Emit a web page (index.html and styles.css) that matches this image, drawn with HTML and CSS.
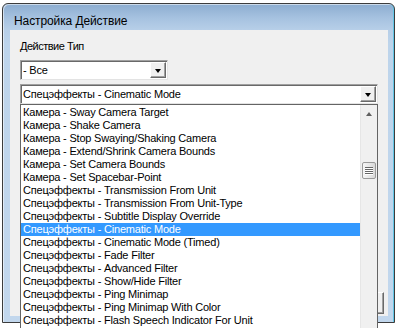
FILE: index.html
```html
<!DOCTYPE html>
<html lang="ru">
<head>
<meta charset="utf-8">
<title>Настройка Действие</title>
<link rel="stylesheet" href="styles.css">
</head>
<body>
<div class="desktop">
  <div class="window">
    <div class="titlebar"><span class="title">Настройка Действие</span></div>
    <div class="client">
      <div class="label">Действие Тип</div>
      <div class="combo combo-small">
        <span class="ctext">- Все</span>
        <span class="ddbtn"><span class="arrow"></span></span>
      </div>
      <div class="combo combo-wide">
        <span class="ctext">Спецэффекты - Cinematic Mode</span>
        <span class="ddbtn"><span class="arrow"></span></span>
      </div>
      <div class="spacer"></div>
      <div class="btnrow"><div class="dlgbtn"></div></div>
    </div>
  </div>

  <div class="droplist">
    <ul class="items">
      <li>Камера - Sway Camera Target</li>
      <li>Камера - Shake Camera</li>
      <li>Камера - Stop Swaying/Shaking Camera</li>
      <li>Камера - Extend/Shrink Camera Bounds</li>
      <li>Камера - Set Camera Bounds</li>
      <li>Камера - Set Spacebar-Point</li>
      <li>Спецэффекты - Transmission From Unit</li>
      <li>Спецэффекты - Transmission From Unit-Type</li>
      <li>Спецэффекты - Subtitle Display Override</li>
      <li class="sel">Спецэффекты - Cinematic Mode</li>
      <li>Спецэффекты - Cinematic Mode (Timed)</li>
      <li>Спецэффекты - Fade Filter</li>
      <li>Спецэффекты - Advanced Filter</li>
      <li>Спецэффекты - Show/Hide Filter</li>
      <li>Спецэффекты - Ping Minimap</li>
      <li>Спецэффекты - Ping Minimap With Color</li>
      <li>Спецэффекты - Flash Speech Indicator For Unit</li>
    </ul>
    <div class="vscroll">
      <div class="sbup"><span class="uparrow"></span></div>
      <div class="sbtrack"><div class="thumb"><span></span><span></span><span></span><span></span></div></div>
    </div>
  </div>
</div>
</body>
</html>
```

FILE: styles.css
```css
* { box-sizing: border-box; }
html, body {
  margin: 0;
  padding: 0;
  width: 398px;
  height: 328px;
  overflow: hidden;
  background: #ffffff;
  font-family: "Liberation Sans", Arial, sans-serif;
  font-size: 11px;
  color: #000;
}
.desktop {
  position: relative;
  width: 398px;
  height: 328px;
  overflow: hidden;
}
.window {
  position: absolute;
  left: 2px;
  top: 3px;
  width: 393px;
  height: 320px;
  border: 1px solid #3c3c3c;
  border-radius: 6px 6px 0 0;
  background: linear-gradient(to bottom, #8cadd0 0px, #a6c2e0 14px, #b7cfe8 26px, #bdd4eb 40px, #c2d7ed 100%);
  box-shadow: inset 1px 1px 0 rgba(255,255,255,0.55), inset -1px 0 0 #62c6e6;
  padding: 0 6px 6px 7px;
  display: flex;
  flex-direction: column;
}
.titlebar {
  height: 26px;
  padding: 9px 0 0 4px;
  line-height: 16px;
}
.title {
  font-family: "Liberation Sans", Arial, sans-serif;
  font-size: 12px;
  letter-spacing: -0.1px;
  color: #000;
}
.client {
  flex: 1;
  background: #f0f0f0;
  padding: 10px 4px 2px 10px;
  display: flex;
  flex-direction: column;
}
.label {
  line-height: 13px;
  height: 13px;
  margin-bottom: 7px;
  letter-spacing: -0.5px;
}
.combo {
  height: 20px;
  background: #fff;
  border-style: solid;
  border-width: 1px;
  border-color: #a0a0a0 #e3e3e3 #e3e3e3 #a0a0a0;
  box-shadow: inset 1px 1px 0 #696969;
  display: flex;
  align-items: center;
  padding: 1px 1px 1px 2px;
}
.combo-small { width: 148px; margin-bottom: 4px; }
.combo-wide { width: 358px; }
.ctext {
  flex: 1;
  line-height: 13px;
  white-space: nowrap;
  overflow: hidden;
  letter-spacing: -0.2px;
}
.ddbtn {
  width: 16px;
  height: 16px;
  background: #f0f0f0;
  border-style: solid;
  border-width: 1px;
  border-color: #ffffff #696969 #696969 #ffffff;
  box-shadow: inset -1px -1px 0 #a0a0a0;
  display: flex;
  align-items: center;
  justify-content: center;
}
.arrow {
  width: 0;
  height: 0;
  border-left: 3.5px solid transparent;
  border-right: 3.5px solid transparent;
  border-top: 4px solid #000;
  margin-top: 1px;
}
.spacer { flex: 1; }
.btnrow {
  display: flex;
  justify-content: flex-end;
}
.dlgbtn {
  width: 75px;
  height: 22px;
  background: #f0f0f0;
  border-style: solid;
  border-width: 1px;
  border-color: #ffffff #696969 #696969 #ffffff;
  box-shadow: inset -1px -1px 0 #a0a0a0;
}
.droplist {
  position: absolute;
  left: 20px;
  top: 104px;
  width: 358px;
  height: 240px;
  background: #fff;
  border: 1px solid #646464;
  display: flex;
}
.items {
  list-style: none;
  margin: 0;
  padding: 1px 0 0 0;
  width: 339px;
}
.items li {
  height: 13px;
  line-height: 13px;
  padding-left: 2px;
  white-space: nowrap;
  overflow: hidden;
  letter-spacing: -0.2px;
}
.items li.sel {
  background: #3399ff;
  color: #fff;
}
.vscroll {
  width: 17px;
  background: #f0f0f0;
  border-left: 1px solid #e6e6e6;
  display: flex;
  flex-direction: column;
}
.sbup {
  height: 17px;
  display: flex;
  align-items: center;
  justify-content: center;
}
.uparrow {
  width: 0;
  height: 0;
  border-left: 3.5px solid transparent;
  border-right: 3.5px solid transparent;
  border-bottom: 4px solid #606060;
  margin-top: 1px;
}
.sbtrack {
  flex: 1;
  padding: 40px 0 0 1px;
}
.thumb {
  width: 14px;
  height: 17px;
  border: 1px solid #9a9a9a;
  border-radius: 2px;
  background: linear-gradient(to right, #f6f6f6, #e6e6e6 60%, #d8d8d8);
  display: flex;
  flex-direction: column;
  align-items: center;
  justify-content: center;
  gap: 1px;
}
.thumb span {
  display: block;
  width: 8px;
  height: 1px;
  background: #666;
  box-shadow: 0 1px 0 #fff;
}
```
